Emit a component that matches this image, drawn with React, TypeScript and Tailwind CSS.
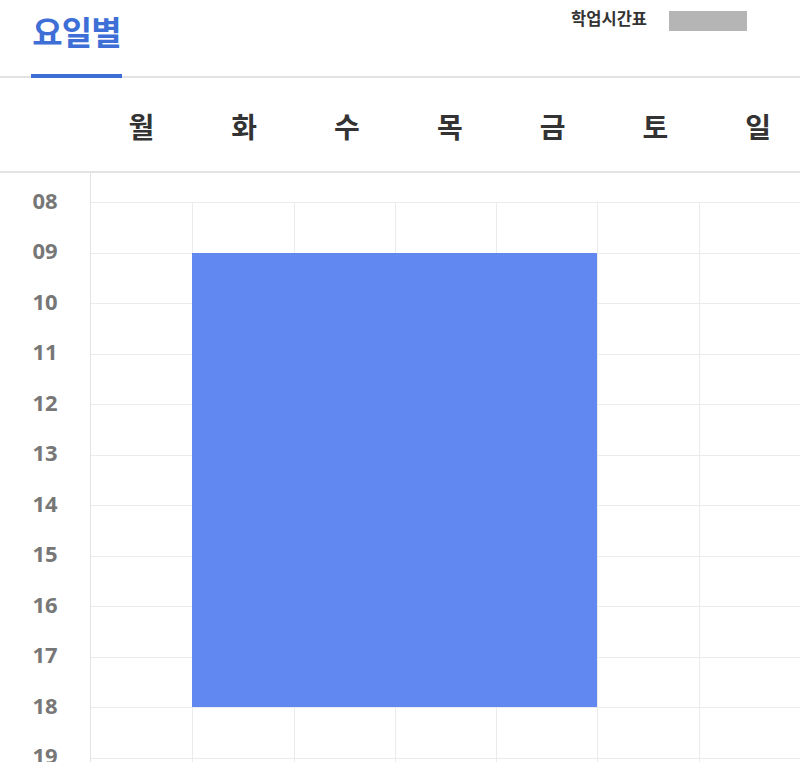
const DAYS = ["월", "화", "수", "목", "금", "토", "일"];
const HOURS = ["08", "09", "10", "11", "12", "13", "14", "15", "16", "17", "18", "19"];

const font = "font-['Noto_Sans','Noto_Sans_CJK_KR',sans-serif]";

export default function App() {
  return (
    <div className={`w-[800px] h-[762px] overflow-hidden bg-white ${font}`}>
      {/* top tabs */}
      <div className="flex justify-between h-[78px] border-b-2 border-[#e3e3e3]">
        <div className="ml-[31px] w-[91px] h-[78px] shrink-0 flex items-center justify-center pb-[9px] border-b-4 border-[#3d6fd6]">
          <span className="text-[33px] font-bold text-[#3d6fd6] leading-none tracking-tight">요일별</span>
        </div>
        <div className="mr-[53px] mt-[8px] flex items-start gap-[22px]">
          <span className="text-[16.5px] font-bold text-[#333] leading-[22px]">학업시간표</span>
          <div className="mt-[3px] w-[78px] h-[20px] bg-[#b5b5b5]" />
        </div>
      </div>

      {/* day header */}
      <div className="flex h-[95px] pt-[4px] border-b-2 border-[#e3e3e3] overflow-hidden">
        <div className="w-[90px] shrink-0" />
        {DAYS.map((d) => (
          <div key={d} className="w-[102.8px] shrink-0 flex items-center justify-center text-[28px] font-bold text-[#333]">
            {d}
          </div>
        ))}
      </div>

      {/* grid body */}
      <div className="flex">
        <div className="w-[91px] shrink-0 border-r border-[#e3e3e3] pt-[2px]">
          {HOURS.map((h) => (
            <div key={h} className="h-[50.5px] flex items-center justify-center text-[22px] font-bold text-[#777]">
              {h}
            </div>
          ))}
        </div>
        <div className="flex-1 pt-[29px]">
          <div className="grid grid-cols-7 grid-rows-[repeat(12,50.5px)]">
            {HOURS.map((h, r) =>
              DAYS.map((d, c) => (
                <div
                  key={h + d}
                  style={{ gridRow: r + 1, gridColumn: c + 1 }}
                  className={`border-t border-[#ebebeb] ${c > 0 ? "border-l" : ""}`}
                />
              ))
            )}
            <div className="row-start-2 row-end-11 col-start-2 col-end-6 bg-[#5882f0]/95" />
          </div>
        </div>
      </div>
    </div>
  );
}
